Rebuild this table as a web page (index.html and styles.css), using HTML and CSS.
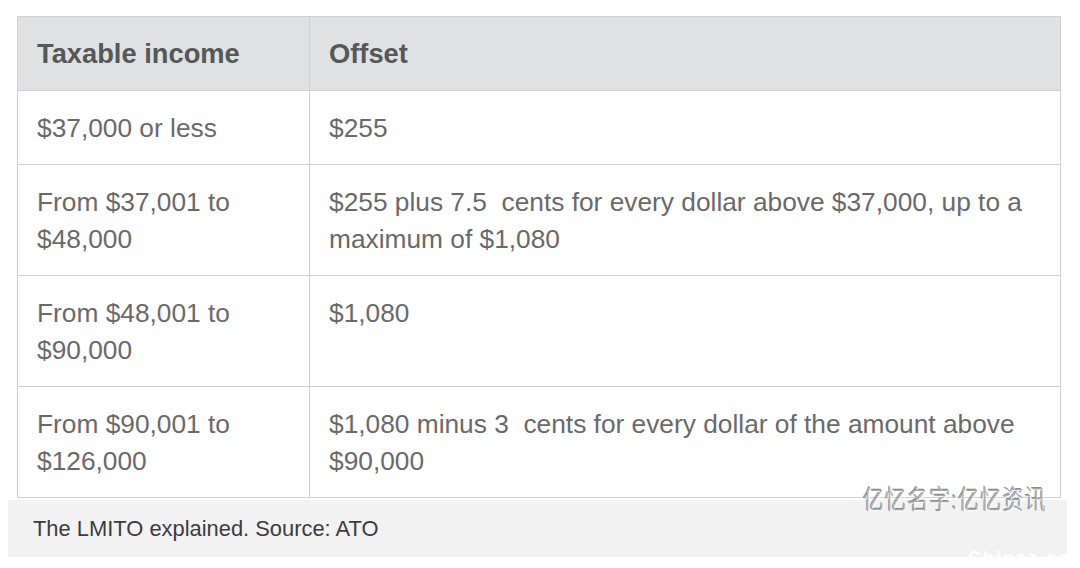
FILE: index.html
```html
<!DOCTYPE html>
<html>
<head>
<meta charset="utf-8">
<link rel="stylesheet" href="styles.css">
</head>
<body>
<figure class="figure">
  <table class="lmito">
    <colgroup><col class="col-a"><col class="col-b"></colgroup>
    <thead>
      <tr><th>Taxable income</th><th>Offset</th></tr>
    </thead>
    <tbody>
      <tr><td>$37,000 or less</td><td>$255</td></tr>
      <tr><td>From $37,001 to $48,000</td><td>$255 plus 7.5&nbsp; cents for every dollar above $37,000, up to a maximum of $1,080</td></tr>
      <tr><td>From $48,001 to $90,000</td><td>$1,080</td></tr>
      <tr><td>From $90,001 to $126,000</td><td>$1,080 minus 3&nbsp; cents for every dollar of the amount above $90,000</td></tr>
    </tbody>
  </table>
  <figcaption class="caption">The LMITO explained. Source: ATO</figcaption>
  <div class="wm-cn">亿忆名字:亿忆资讯</div>
  <div class="wm-en">Chinaz.com</div>
</figure>
</body>
</html>
```

FILE: styles.css
```css
html, body {
  margin: 0;
  padding: 0;
  background: #ffffff;
  overflow: hidden;
}
body {
  font-family: "Liberation Sans", Arial, sans-serif;
}
.figure {
  position: relative;
  margin: 16px 0 0 8px;
  width: 1059px;
}
.lmito {
  border-collapse: collapse;
  margin-left: 9px;
  width: 1043px;
  table-layout: fixed;
}
.col-a { width: 292px; }
.col-b { width: 751px; }
.lmito th, .lmito td {
  box-sizing: border-box;
  border: 1px solid #cfd0d1;
  text-align: left;
  vertical-align: top;
  padding: 19px 19px 17px 19px;
  line-height: 37px;
  font-size: 26.3px;
}
.lmito th {
  background: #dfe1e2;
  color: #555758;
  font-weight: bold;
  font-size: 27.3px;
  line-height: 36px;
  padding-top: 19px;
  padding-bottom: 18px;
}
.lmito td {
  color: #6a6a6a;
}
.caption {
  margin: 2px 0 0 0;
  background: #f2f2f2;
  height: 57px;
  display: flex;
  align-items: center;
  padding-left: 25px;
  font-size: 21.9px;
  color: #3c3c3c;
}
.wm-cn {
  position: absolute;
  left: 855px;
  top: 464px;
  font-family: "Noto Sans CJK SC", sans-serif;
  font-weight: 300;
  font-size: 21px;
  line-height: 1.4;
  color: #a8a8a8;
  letter-spacing: 1.2px;
  transform: scaleY(1.25);
  transform-origin: left top;
  text-shadow: 1px 1px 0 #ffffff, -1px -1px 0 #8a8a8a;
}
.wm-en {
  position: absolute;
  left: 960px;
  top: 533px;
  font-size: 18px;
  line-height: 1;
  font-weight: bold;
  color: #ffffff;
  letter-spacing: 2px;
}
```
